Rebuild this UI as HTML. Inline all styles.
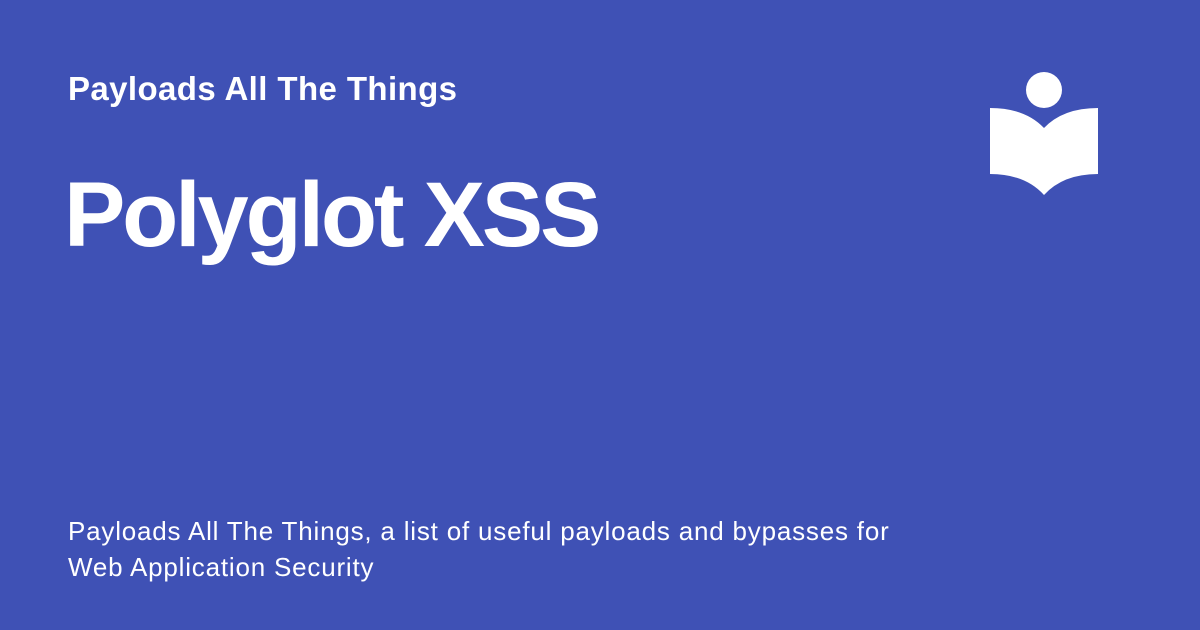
<!DOCTYPE html>
<html><head><meta charset="utf-8"><style>
html,body{margin:0;padding:0}
body{width:1200px;height:630px;background:#3f51b5;position:relative;overflow:hidden;font-family:"Liberation Sans",sans-serif;color:#fff}
.t1{position:absolute;left:68px;top:70px;font-size:33px;font-weight:bold;letter-spacing:0.4px}
.t2{position:absolute;left:64px;top:163px;font-size:92px;font-weight:bold;letter-spacing:-3.2px}
.t3{position:absolute;left:68px;top:513px;font-size:26px;line-height:36px;letter-spacing:0.8px}
svg{position:absolute;left:0;top:0}
</style></head><body>
<div class="t1">Payloads All The Things</div>
<div class="t2">Polyglot XSS</div>
<div class="t3">Payloads All The Things, a list of useful payloads and bypasses for<br>Web Application Security</div>
<svg width="1200" height="630"><circle cx="1044" cy="90" r="18" fill="#fff"/>
<path d="M990 108 Q1025 108 1044 128 Q1063 108 1098 108 L1098 174 Q1063 174 1044 195 Q1025 174 990 174 Z" fill="#fff"/></svg>
</body></html>
